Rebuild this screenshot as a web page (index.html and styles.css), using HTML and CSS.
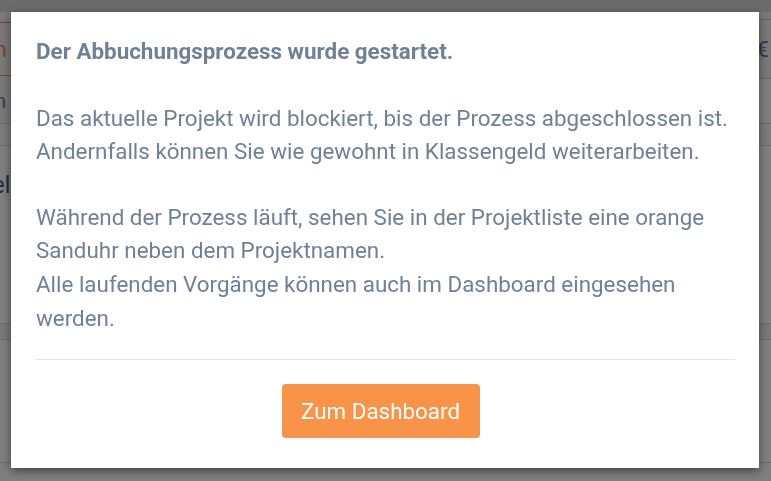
FILE: index.html
```html
<!DOCTYPE html>
<html lang="de">
<head>
<meta charset="utf-8">
<title>Abbuchung</title>
<link rel="stylesheet" href="styles.css">
</head>
<body>
<div class="page">
  <div class="topbar"></div>
  <div class="head">
    <div class="tab"><span class="tab-label">Projekt Sommerfahrt Berlin</span></div>
    <div class="sum"><span>120,00 €</span></div>
  </div>
  <div class="sub"><span class="sub-label">Übersicht der Buchungen</span></div>
  <div class="band"></div>
  <div class="list">
    <span class="rowtitle">Einzelbuchungen</span>
  </div>
  <div class="band2"></div>
  <div class="rest"></div>
</div>
<div class="overlay">
  <div class="modal">
    <div class="modal-body">
      <p class="title">Der Abbuchungsprozess wurde gestartet.</p>
      <p class="text">Das aktuelle Projekt wird blockiert, bis der Prozess abgeschlossen ist.<br>Andernfalls können Sie wie gewohnt in Klassengeld weiterarbeiten.</p>
      <p class="text">Während der Prozess läuft, sehen Sie in der Projektliste eine orange Sanduhr neben dem Projektnamen.<br>Alle laufenden Vorgänge können auch im Dashboard eingesehen werden.</p>
    </div>
    <div class="modal-footer">
      <button class="btn">Zum Dashboard</button>
    </div>
  </div>
</div>
</body>
</html>
```

FILE: styles.css
```css
html, body {
  margin: 0;
  padding: 0;
  height: 100%;
}
body {
  font-family: Roboto, "Liberation Sans", sans-serif;
  background: #ffffff;
  overflow: hidden;
}
.page {
  height: 100%;
  display: flex;
  flex-direction: column;
}
.topbar {
  height: 12px;
  background: #d6d6d6;
  flex: none;
}
.head {
  height: 67px;
  background: #f2f2f2;
  display: flex;
  justify-content: space-between;
  align-items: flex-start;
  flex: none;
}
.tab {
  margin-top: 10px;
  height: 52px;
  border-top: 1px solid #e8893a;
  border-bottom: 1px solid #e8893a;
  display: flex;
  align-items: center;
  overflow: hidden;
  width: 300px;
  justify-content: flex-end;
}
.tab-label {
  color: #f0882c;
  font-size: 22px;
  white-space: nowrap;
  margin-right: 293px;
}
.sum {
  margin-top: 7px;
  height: 58px;
  border-top: 1px solid #cfcfcf;
  border-bottom: 1px solid #cfcfcf;
  display: flex;
  align-items: center;
  justify-content: flex-end;
  width: 120px;
  padding-right: 2px;
}
.sum span {
  color: #5b7896;
  font-size: 22px;
  white-space: nowrap;
}
.sub {
  height: 44px;
  background: #f2f2f2;
  display: flex;
  align-items: center;
  justify-content: flex-end;
  width: 300px;
  overflow: hidden;
  flex: none;
}
.sub-label {
  color: #5f7996;
  font-size: 20px;
  white-space: nowrap;
  margin-right: 294px;
}
.band {
  height: 21px;
  background: #f8f8f8;
  border-top: 1px solid #d8d8d8;
  border-bottom: 1px solid #d8d8d8;
  flex: none;
}
.list {
  height: 177px;
  flex: none;
  display: flex;
  align-items: flex-start;
  overflow: hidden;
}
.rowtitle {
  margin-top: 26px;
  margin-left: -50px;
  font-size: 23px;
  color: #3d5a7a;
  white-space: nowrap;
}
.band2 {
  height: 15px;
  background: #f3f3f3;
  border-top: 1px solid #d8d8d8;
  border-bottom: 1px solid #d8d8d8;
  flex: none;
}
.rest {
  height: 122px;
  border-bottom: 1px solid #d8d8d8;
  flex: none;
}
.overlay {
  position: fixed;
  inset: 0;
  background: rgba(0, 0, 0, 0.5);
  padding: 12px 0 0 11px;
}
.modal {
  width: 748px;
  height: 456px;
  background: #fff;
  box-shadow: 0 3px 9px rgba(0, 0, 0, 0.5);
  box-sizing: border-box;
  padding: 0 24px 0 25px;
  display: flex;
  flex-direction: column;
}
.modal-body {
  padding-top: 23px;
  padding-bottom: 24px;
  border-bottom: 1px solid #e5e5e5;
  color: #6f8197;
  font-size: 22.4px;
  line-height: 33.6px;
}
.title {
  font-weight: bold;
  margin: 0 0 33px;
}
.text {
  margin: 0 0 32px;
}
.text:last-child {
  margin-bottom: 0;
}
.modal-footer {
  display: flex;
  justify-content: center;
  padding: 24px 10px 0 0;
}
.btn {
  width: 198px;
  height: 54px;
  background: #f7944a;
  border: none;
  border-radius: 4px;
  color: #fff;
  font-family: Roboto, "Liberation Sans", sans-serif;
  font-size: 22.4px;
  padding: 0;
}
```
